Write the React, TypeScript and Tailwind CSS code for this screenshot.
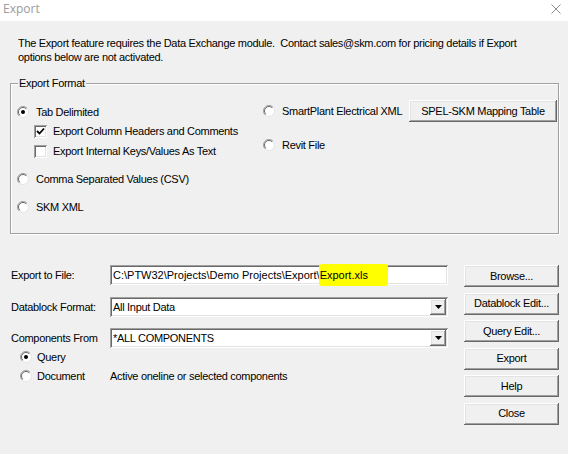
import type { ReactNode } from 'react'

const raised =
  'bg-[#f0f0f0] shadow-[inset_-1px_-1px_#696969,inset_1px_1px_#ffffff,inset_-2px_-2px_#a0a0a0,inset_2px_2px_#e3e3e3]'
const sunken =
  'bg-white shadow-[inset_1px_1px_#a0a0a0,inset_-1px_-1px_#ffffff,inset_2px_2px_#696969,inset_-2px_-2px_#e3e3e3]'

function Radio({ checked = false }: { checked?: boolean }) {
  return (
    <svg width="12" height="12" viewBox="0 0 12 12" className="shrink-0">
      <circle cx="6" cy="6" r="5.5" fill="#ffffff" stroke="#e3e3e3" />
      <path d="M2.1 9.9 A5.5 5.5 0 0 1 9.9 2.1" fill="none" stroke="#a0a0a0" />
      <path d="M2.8 9.2 A4.5 4.5 0 0 1 9.2 2.8" fill="none" stroke="#696969" />
      {checked ? <circle cx="6" cy="6" r="2" fill="#000000" /> : null}
    </svg>
  )
}

function Checkbox({ checked = false }: { checked?: boolean }) {
  return (
    <span className={`flex h-[13px] w-[13px] shrink-0 items-center justify-center ${sunken}`}>
      {checked ? (
        <svg width="9" height="9" viewBox="0 0 9 9">
          <polyline points="1,4 3.5,6.5 8,1.5" fill="none" stroke="#000000" strokeWidth="1.8" />
        </svg>
      ) : null}
    </span>
  )
}

function RadioRow({ label, checked, gap = 'gap-[7px]' }: { label: string; checked?: boolean; gap?: string }) {
  return (
    <div className={`flex h-[14px] items-center ${gap}`}>
      <Radio checked={checked} />
      <span className="whitespace-nowrap">{label}</span>
    </div>
  )
}

function WinButton({ children, className = '' }: { children: ReactNode; className?: string }) {
  return (
    <div className={`flex h-[22px] items-center justify-center ${raised} ${className}`}>
      <span className="whitespace-nowrap">{children}</span>
    </div>
  )
}

function Combo({ value }: { value: string }) {
  return (
    <div className={`flex h-[20px] w-[338px] items-center ${sunken}`}>
      <span className="flex-1 pl-[3px]">{value}</span>
      <span className={`mr-[2px] flex h-[16px] w-[16px] items-center justify-center ${raised}`}>
        <svg width="7" height="4" viewBox="0 0 7 4">
          <polygon points="0,0 7,0 3.5,4" fill="#000000" />
        </svg>
      </span>
    </div>
  )
}

export default function App() {
  return (
    <div className="flex h-[454px] w-[568px] flex-col bg-[#f0f0f0] font-['Liberation_Sans',Arial,sans-serif] text-[11px] leading-[13px] tracking-[-0.3px] text-black">
      <div className="flex h-[21px] shrink-0 items-start justify-between bg-white">
        <span className="ml-[3px] mt-[1px] font-['Open_Sans',sans-serif] text-[12px] leading-[16px] tracking-normal text-[#9b9b9b]">
          Export
        </span>
        <svg width="10" height="10" viewBox="0 0 10 10" className="mr-[7px] mt-[4px]">
          <path d="M0.5 0.5 L9.5 9.5 M9.5 0.5 L0.5 9.5" stroke="#8c8c8c" strokeWidth="1" />
        </svg>
      </div>

      <p className="ml-[18px] mt-[15px] whitespace-pre leading-[14px]">
        {'The Export feature requires the Data Exchange module.  Contact sales@skm.com for pricing details if Export'}
        <br />
        {'options below are not activated.'}
      </p>

      <div className="relative ml-[10px] mt-[19px] flex h-[151px] w-[549px] border border-[#a0a0a0] shadow-[1px_1px_0_#ffffff,inset_1px_1px_0_#ffffff]">
        <span className="absolute left-[7px] top-[-7px] bg-[#f0f0f0] px-[1px]">Export Format</span>

        <div className="flex w-[252px] flex-col pl-[6px] pt-[21px]">
          <RadioRow label="Tab Delimited" checked />
          <div className="ml-[17px] mt-[5px] flex h-[14px] items-center gap-[6px]">
            <Checkbox checked />
            <span className="whitespace-nowrap">Export Column Headers and Comments</span>
          </div>
          <div className="ml-[17px] mt-[6px] flex h-[14px] items-center gap-[6px]">
            <Checkbox />
            <span className="whitespace-nowrap">Export Internal Keys/Values As Text</span>
          </div>
          <div className="mt-[14px]">
            <RadioRow label="Comma Separated Values (CSV)" />
          </div>
          <div className="mt-[14px]">
            <RadioRow label="SKM XML" />
          </div>
        </div>

        <div className="flex flex-col pt-[16px]">
          <div className="flex h-[22px] items-center">
            <div className="w-[140px]">
              <RadioRow label="SmartPlant Electrical XML" />
            </div>
            <WinButton className="ml-[6px] w-[148px]">SPEL-SKM Mapping Table</WinButton>
          </div>
          <div className="mt-[16px]">
            <RadioRow label="Revit File" />
          </div>
        </div>
      </div>

      <div className="ml-[11px] mt-[31px] flex">
        <div className="flex flex-col">
          <div className="flex h-[20px] items-center">
            <span className="w-[99px]">Export to File:</span>
            <div className={`flex h-[20px] w-[338px] items-center ${sunken}`}>
              <span className="whitespace-nowrap pl-[3px] tracking-normal">
                {'C:\\PTW32\\Projects\\Demo Projects\\Export\\'}
                <span className="relative">
                  <span className="absolute bottom-[-5px] left-[-1px] right-[-20px] top-[-5px] rounded-[3px] bg-[#ffff00]" />
                  <span className="relative">Export.xls</span>
                </span>
              </span>
            </div>
          </div>
          <div className="mt-[12px] flex h-[20px] items-center">
            <span className="w-[99px]">Datablock Format:</span>
            <Combo value="All Input Data" />
          </div>
          <div className="mt-[11px] flex h-[20px] items-center">
            <span className="w-[99px]">Components From</span>
            <Combo value="*ALL COMPONENTS" />
          </div>
          <div className="ml-[9px] mt-[2px]">
            <RadioRow label="Query" checked gap="gap-[5px]" />
          </div>
          <div className="ml-[9px] mt-[5px] flex h-[14px] items-center">
            <div className="w-[90px]">
              <RadioRow label="Document" gap="gap-[5px]" />
            </div>
            <span className="whitespace-nowrap">Active oneline or selected components</span>
          </div>
        </div>

        <div className="ml-[16px] flex w-[95px] flex-col gap-[5.5px]">
          <WinButton>Browse...</WinButton>
          <WinButton>Datablock Edit...</WinButton>
          <WinButton>Query Edit...</WinButton>
          <WinButton>Export</WinButton>
          <WinButton>Help</WinButton>
          <WinButton>Close</WinButton>
        </div>
      </div>
    </div>
  )
}
